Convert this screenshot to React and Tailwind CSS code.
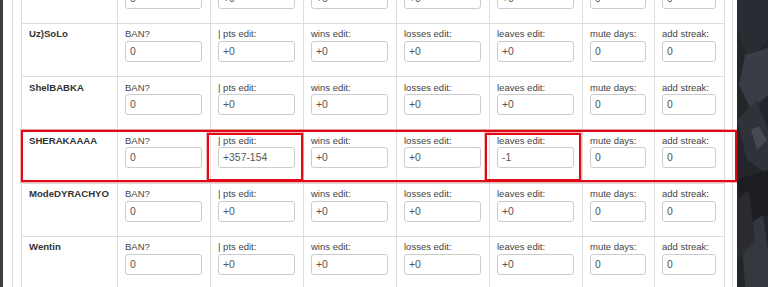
import React from "react";

const rows = [
  { name: "", pts: "+0", leaves: "+0", hidden: true },
  { name: "Uz)SoLo", pts: "+0", leaves: "+0" },
  { name: "ShelBABKA", pts: "+0", leaves: "+0" },
  { name: "SHERAKAAAA", pts: "+357-154", leaves: "-1" },
  { name: "ModeDYRACHYO", pts: "+0", leaves: "+0" },
  { name: "Wentin", pts: "+0", leaves: "+0" },
];

function Field({ label, value, hidden }) {
  return (
    <div className="border-r border-b border-[#dddddd] pt-[4.5px] pl-[7px] pr-[8px]">
      <div className="h-[12.5px] text-[9.5px] leading-[12.5px] text-[#444] whitespace-nowrap">{hidden ? "" : label}</div>
      <input
        readOnly
        value={value}
        className="block w-full h-[21px] border border-[#cccccc] rounded-[3px] pl-[4px] text-[10.4px] text-[#555] bg-white outline-none"
        style={{ fontFamily: '"Liberation Sans", Arial, sans-serif' }}
      />
    </div>
  );
}

export default function App() {
  return (
    <div
      className="relative w-[768px] h-[287px] overflow-hidden flex bg-[#22242a]"
      style={{ fontFamily: '"Liberation Sans", Arial, sans-serif' }}
    >
      <div className="w-[3px] shrink-0 bg-[#3c3d40]" />
      <div className="w-[734px] shrink-0 bg-white pl-[9px] pr-[4px]">
        <div className="min-h-full border-l border-r border-[#dddddd] px-[8px]">
          <div className="-mt-[29.5px] border-l border-[#dddddd] grid grid-cols-[96px_93px_93px_93px_93px_93px_72px_70px] auto-rows-[53.3px]">
            {rows.map((r, i) => (
              <React.Fragment key={i}>
                <div className="border-r border-b border-[#dddddd] pt-[4.5px] pl-[7px]">
                  <div className="text-[9.6px] leading-[12.5px] font-bold text-[#333] whitespace-nowrap">{r.name}</div>
                </div>
                <Field label="BAN?" value="0" hidden={r.hidden} />
                <Field label="| pts edit:" value={r.pts} hidden={r.hidden} />
                <Field label="wins edit:" value="+0" hidden={r.hidden} />
                <Field label="losses edit:" value="+0" hidden={r.hidden} />
                <Field label="leaves edit:" value={r.leaves} hidden={r.hidden} />
                <Field label="mute days:" value="0" hidden={r.hidden} />
                <Field label="add streak:" value="0" hidden={r.hidden} />
              </React.Fragment>
            ))}
          </div>
        </div>
      </div>
      <div className="flex-1 relative">
        <svg width="31" height="287" viewBox="0 0 31 287" className="block">
          <rect width="31" height="287" fill="#23252b" />
          <path d="M0 0 L31 0 L31 40 L12 60 L0 30 Z" fill="#2a2c33" />
          <path d="M8 55 L31 48 L31 95 L14 110 L2 85 Z" fill="#3a3d45" />
          <path d="M0 120 L20 100 L31 130 L31 175 L10 160 Z" fill="#2f3239" />
          <path d="M0 180 L31 170 L31 215 L5 225 Z" fill="#1c1e23" />
          <path d="M4 230 L26 215 L31 250 L31 287 L8 287 Z" fill="#34373e" />
          <path d="M0 200 L12 190 L18 240 L0 260 Z" fill="#292b31" />
          <path d="M14 130 L22 126 L30 140 L20 150 Z" fill="#464952" />
        </svg>
      </div>

      <div className="absolute left-[21px] top-[130px] w-[716px] h-[52px] border-2 border-[#df0a15] shadow-[0_0_0_1px_rgba(223,10,21,0.3)] pointer-events-none" />
      <div className="absolute left-[207px] top-[133px] w-[96px] h-[48px] border-2 border-[#df0a15] shadow-[0_0_0_1px_rgba(223,10,21,0.3)] pointer-events-none" />
      <div className="absolute left-[485px] top-[133px] w-[96px] h-[48px] border-2 border-[#df0a15] shadow-[0_0_0_1px_rgba(223,10,21,0.3)] pointer-events-none" />
    </div>
  );
}
